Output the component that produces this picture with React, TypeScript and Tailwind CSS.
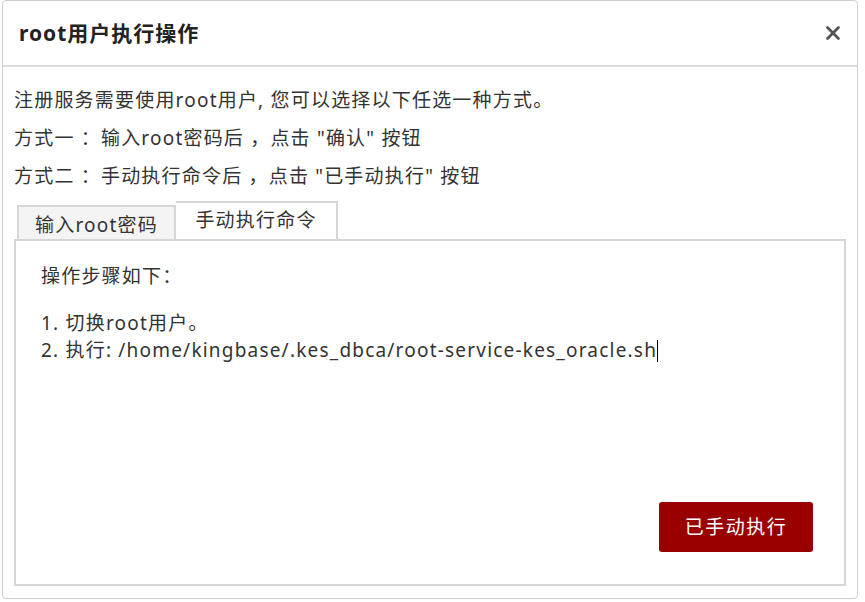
import { X } from "lucide-react";

const font = { fontFamily: '"Noto Sans", "Noto Sans CJK SC", sans-serif' };

const RootActionDialog = () => {
  return (
    <div className="w-[865px] h-[602px] bg-white" style={font}>
      <div className="ml-[2px] w-[856px] h-[599px] border border-[#cfcfcf] rounded-[4px] flex flex-col text-[#333]">
        {/* header */}
        <div className="h-[66px] shrink-0 border-b-2 border-[#dcdcdc] flex items-center justify-between pl-[16px] pr-[13px]">
          <span className="text-[21px] leading-[30px] font-bold tracking-[1px] text-[#222]">root用户执行操作</span>
          <X size={22} strokeWidth={3} className="text-[#555]" />
        </div>

        {/* body */}
        <div className="flex-1 flex flex-col px-[11px] pt-[18px] pb-[12px] tracking-[1.2px]">
          <div className="text-[19px] leading-[38px] -mt-[4px]">
            <p>注册服务需要使用root用户, 您可以选择以下任选一种方式。</p>
            <p>方式一 ：输入root密码后 ，点击 "确认" 按钮</p>
            <p>方式二 ：手动执行命令后 ，点击 "已手动执行" 按钮</p>
          </div>

          <div className="flex items-end pl-[3px] mt-[6px] text-[19px]">
            <div className="w-[159px] h-[34px] bg-[#f4f4f4] border-2 border-b-0 border-[#d6d6d6] flex items-center justify-center pt-[4px]">
              输入root密码
            </div>
            <div className="w-[162px] h-[38px] bg-white border-2 border-l-0 border-b-0 border-[#d6d6d6] flex items-center justify-center pb-[2px]">
              手动执行命令
            </div>
          </div>

          <div className="flex-1 border-2 border-[#d6d6d6] w-[832px] flex flex-col px-[25px] pt-[22px] pb-[32px]">
            <p className="text-[19px] leading-[27px]">操作步骤如下：</p>
            <div className="text-[19px] leading-[27px] mt-[20px]">
              <p>1. 切换root用户。</p>
              <p className="flex items-center">
                2. 执行: /home/kingbase/.kes_dbca/root-service-kes_oracle.sh
                <span className="inline-block w-[1px] h-[22px] bg-black" />
              </p>
            </div>
            <div className="flex-1" />
            <div className="flex justify-end pr-[6px]">
              <button
                type="button"
                className="w-[154px] h-[50px] rounded-[3px] bg-[#990000] text-white text-[19px] tracking-[1.5px]"
              >
                已手动执行
              </button>
            </div>
          </div>
        </div>
      </div>
    </div>
  );
};

export default function App() {
  return <RootActionDialog />;
}
